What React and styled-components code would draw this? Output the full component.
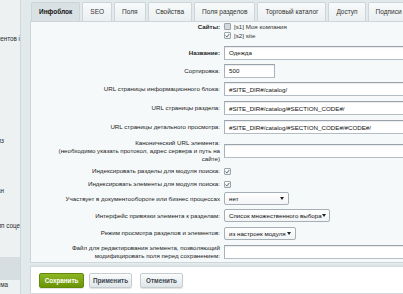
import React from 'react';
import styled, { createGlobalStyle } from 'styled-components';

const GlobalStyle = createGlobalStyle`
  html, body {
    margin: 0;
    padding: 0;
  }
  body {
    width: 403px;
    height: 294px;
    overflow: hidden;
    background: #e2e9eb;
    font-family: "Liberation Sans", Arial, sans-serif;
    color: #1f1f1f;
  }
`;

const Layout = styled.div`
  display: flex;
  width: 403px;
  height: 294px;
  overflow: hidden;
`;

const Sidebar = styled.div`
  flex: 0 0 20px;
  display: flex;
  flex-direction: column;
  background: #edf1f2;
  border-right: 1px solid #cfd8db;
  overflow: hidden;
`;

const MenuItem = styled.div`
  display: flex;
  justify-content: flex-end;
  height: ${(p) => p.$h || 10}px;
  margin-top: ${(p) => p.$top || 0}px;
  align-items: center;
  padding-right: ${(p) => p.$end || 0}px;
  white-space: nowrap;
  font-size: 6.3px;
  color: #2b2b2b;
  background: ${(p) => (p.$active ? '#d6dee1' : 'transparent')};
  overflow: hidden;
`;

const Main = styled.div`
  flex: 1;
  min-width: 0;
  display: flex;
  flex-direction: column;
  padding-left: 9px;
  background: #e2e9eb;
`;

const Tabs = styled.div`
  display: flex;
  gap: 2px;
  height: 19px;
  padding: 2px 0 0 1px;
  white-space: nowrap;
`;

const Tab = styled.div`
  flex: 0 0 auto;
  display: flex;
  align-items: center;
  padding: 0 7px;
  border: 1px solid #ccd5d8;
  border-bottom: none;
  border-radius: 2px 2px 0 0;
  font-size: 6.5px;
  font-weight: ${(p) => (p.$active ? 'bold' : 'normal')};
  color: ${(p) => (p.$active ? '#111' : '#333')};
  background: ${(p) =>
    p.$active ? '#d9e1e4' : 'linear-gradient(#f8fafa, #eaeff1)'};
`;

const Panel = styled.div`
  height: 241px;
  border: 1px solid #ccd5d8;
  border-right: none;
  border-bottom: none;
  background: #f6f9f9;
  overflow: hidden;
`;

const Row = styled.div`
  display: grid;
  grid-template-columns: 189px 1fr;
  column-gap: 4px;
  height: ${(p) => p.$h}px;
  align-items: ${(p) => (p.$top ? 'start' : 'center')};
`;

const Label = styled.div`
  text-align: right;
  font-size: 6.2px;
  line-height: ${(p) => p.$lh || 8}px;
  white-space: nowrap;
  font-weight: ${(p) => (p.$bold ? 'bold' : 'normal')};
  color: #222;
`;

const Field = styled.div`
  display: flex;
  flex-direction: column;
  min-width: 0;
`;

const TextInput = styled.div`
  box-sizing: border-box;
  width: ${(p) => p.$w || 200}px;
  height: 14px;
  padding-left: 4px;
  display: flex;
  align-items: center;
  background: #fff;
  border: 1px solid;
  border-color: #9aa3ad #aab3bb #b5bdc4 #aab3bb;
  box-shadow: inset 0 1px 1px rgba(0, 0, 0, 0.08);
  font-size: 6.2px;
  color: #111;
  white-space: nowrap;
  overflow: hidden;
`;

const Select = styled.div`
  box-sizing: border-box;
  width: ${(p) => p.$w}px;
  height: 13px;
  padding: 0 4px;
  display: flex;
  align-items: center;
  justify-content: space-between;
  background: linear-gradient(#ffffff, #f2f4f5);
  border: 1px solid #a5afb5;
  border-radius: 2px;
  font-size: 6.2px;
  color: #111;
  white-space: nowrap;

  &::after {
    content: '';
    border-left: 2px solid transparent;
    border-right: 2px solid transparent;
    border-top: 3px solid #222;
  }
`;

const CheckLine = styled.div`
  display: flex;
  align-items: center;
  gap: 3px;
  height: ${(p) => p.$h || 9}px;
  font-size: 6.2px;
  color: #333;
  white-space: nowrap;
`;

const Box = styled.span`
  box-sizing: border-box;
  display: inline-flex;
  align-items: center;
  justify-content: center;
  width: 7px;
  height: 7px;
  border: 1px solid #9aa4a9;
  border-radius: 1px;
  background: ${(p) =>
    p.$checked ? 'linear-gradient(#ffffff, #e6eaec)' : '#d3d9dc'};
`;

const Check = ({ checked }) => (
  <Box $checked={checked}>
    {checked && (
      <svg width="5" height="5" viewBox="0 0 5 5">
        <path d="M0.6 2.6 L1.9 3.9 L4.4 0.9" fill="none" stroke="#4a5358" strokeWidth="0.9" />
      </svg>
    )}
  </Box>
);

const Divider = styled.div`
  height: 4px;
  border-top: 1px solid #ccd5d8;
  background: linear-gradient(#e9eef0, #d4dcdf);
`;

const Footer = styled.div`
  display: flex;
  align-items: center;
  height: 26px;
  padding-left: 8px;
  background: #fff;
  border-left: 1px solid #ccd5d8;
  border-bottom: 1px solid #d3dadd;
`;

const Button = styled.div`
  box-sizing: border-box;
  display: flex;
  align-items: center;
  justify-content: center;
  width: ${(p) => p.$w}px;
  height: 15px;
  margin-right: ${(p) => p.$gap || 0}px;
  border-radius: 2px;
  font-size: 6.3px;
  font-weight: bold;
  color: ${(p) => (p.$primary ? '#fff' : '#3a4650')};
  background: ${(p) =>
    p.$primary
      ? 'linear-gradient(#8db625, #6b9405)'
      : 'linear-gradient(#fbfcfc, #dfe5e7)'};
  border: 1px solid ${(p) => (p.$primary ? '#628a08' : '#c5cdd1')};
  box-shadow: 0 1px 1px rgba(0, 0, 0, 0.12);
`;

const tabs = [
  'Инфоблок',
  'SEO',
  'Поля',
  'Свойства',
  'Поля разделов',
  'Торговый каталог',
  'Доступ',
  'Подписи',
];

export default function App() {
  return (
    <>
      <GlobalStyle />
      <Layout>
        <Sidebar>
          <MenuItem $top={33}>Типы элементов і</MenuItem>
          <MenuItem $top={92} $end={16}>Экспорт из</MenuItem>
          <MenuItem $top={40} $end={16}>Рекламная кампан</MenuItem>
          <MenuItem $top={25}>Групп соце</MenuItem>
          <MenuItem $top={27} $h={23} $active />
          <MenuItem $h={9} $end={12}>Схема</MenuItem>
        </Sidebar>
        <Main>
          <Tabs>
            {tabs.map((t, i) => (
              <Tab key={t} $active={i === 0}>
                {t}
              </Tab>
            ))}
          </Tabs>
          <Panel>
            <Row $h={22} $top>
              <Label $bold $lh={9}>Сайты:</Label>
              <Field>
                <CheckLine>
                  <Check />
                  [s1] Моя компания
                </CheckLine>
                <CheckLine>
                  <Check checked />
                  [s2] site
                </CheckLine>
              </Field>
            </Row>
            <Row $h={18}>
              <Label $bold>Название:</Label>
              <TextInput>Одежда</TextInput>
            </Row>
            <Row $h={18}>
              <Label>Сортировка:</Label>
              <TextInput $w={51}>500</TextInput>
            </Row>
            <Row $h={19}>
              <Label>URL страницы информационного блока:</Label>
              <TextInput>#SITE_DIR#/catalog/</TextInput>
            </Row>
            <Row $h={19}>
              <Label>URL страницы раздела:</Label>
              <TextInput>#SITE_DIR#/catalog/#SECTION_CODE#/</TextInput>
            </Row>
            <Row $h={19}>
              <Label>URL страницы детального просмотра:</Label>
              <TextInput>#SITE_DIR#/catalog/#SECTION_CODE#/#CODE#/</TextInput>
            </Row>
            <Row $h={28}>
              <Label>
                Канонический URL элемента:
                <br />
                (необходимо указать протокол, адрес сервера и путь на
                <br />
                сайте)
              </Label>
              <TextInput />
            </Row>
            <Row $h={13}>
              <Label>Индексировать разделы для модуля поиска:</Label>
              <Field>
                <Check checked />
              </Field>
            </Row>
            <Row $h={13}>
              <Label>Индексировать элементы для модуля поиска:</Label>
              <Field>
                <Check checked />
              </Field>
            </Row>
            <Row $h={16}>
              <Label>Участвует в документообороте или бизнес процессах</Label>
              <Select $w={65}>нет</Select>
            </Row>
            <Row $h={18}>
              <Label>Интерфейс привязки элемента к разделам:</Label>
              <Select $w={106}>Список множественного выбора</Select>
            </Row>
            <Row $h={17}>
              <Label>Режим просмотра разделов и элементов:</Label>
              <Select $w={72}>из настроек модуля</Select>
            </Row>
            <Row $h={21}>
              <Label>
                Файл для редактирования элемента, позволяющий
                <br />
                модифицировать поля перед сохранением:
              </Label>
              <TextInput />
            </Row>
          </Panel>
          <Divider />
          <Footer>
            <Button $primary $w={45} $gap={5}>Сохранить</Button>
            <Button $w={43} $gap={8}>Применить</Button>
            <Button $w={43}>Отменить</Button>
          </Footer>
        </Main>
      </Layout>
    </>
  );
}
